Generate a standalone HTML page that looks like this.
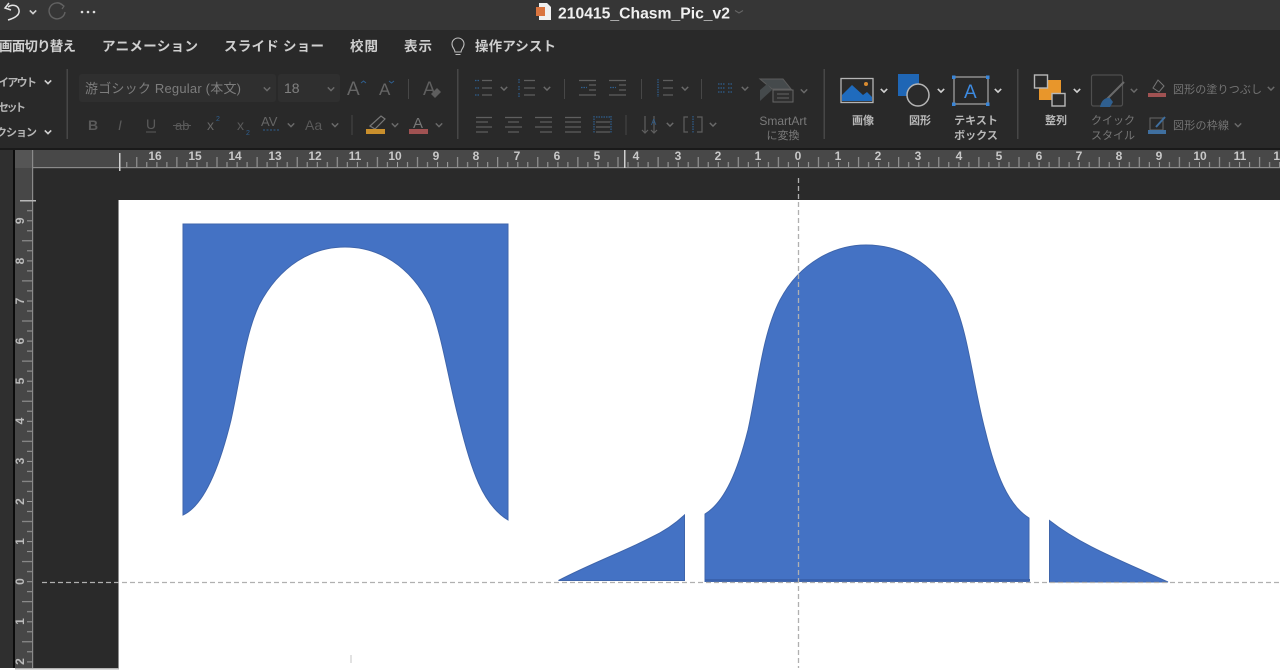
<!DOCTYPE html>
<html lang="ja"><head><meta charset="utf-8"><title>210415_Chasm_Pic_v2</title>
<style>
html,body{margin:0;padding:0;background:#2a2a2a;width:1280px;height:670px;overflow:hidden}
svg{display:block}
text{font-family:"Liberation Sans","Noto Sans CJK JP",sans-serif}
.chrome{filter:blur(.35px)}
.m{font-size:13.5px;font-weight:700;fill:#cfcfcf}
.s{font-size:11px;font-weight:700;fill:#b5b5b5}
.d{font-size:11px;fill:#757575}
.l{font-size:11px;font-weight:700;fill:#b8b8b8;text-anchor:middle}
.r{font-size:12px;fill:#c8c8c8;text-anchor:middle;font-weight:700}
.v{font-size:12px;fill:#bbb;text-anchor:middle;font-weight:700}
.g{stroke:#5f5f5f;stroke-width:1.2;fill:none}
.b{stroke:#2f5f8f;stroke-width:1.2;fill:none;stroke-dasharray:1.5 1}
</style></head><body>
<svg width="1280" height="670" viewBox="0 0 1280 670" xmlns="http://www.w3.org/2000/svg">
<defs>
<path id="c" d="M-3.2 -1.6L0 1.6L3.2 -1.6" fill="none" stroke="#6a6a6a" stroke-width="1.5"/>
<path id="w" d="M-3.2 -1.6L0 1.6L3.2 -1.6" fill="none" stroke="#d0d0d0" stroke-width="1.6"/>
<pattern id="ph" patternUnits="userSpaceOnUse" x="798" y="157" width="40.1" height="10">
<rect x="0" y="5" width="1" height="5" fill="#a0a0a0"/><rect x="10" y="5" width="1" height="5" fill="#a0a0a0"/><rect x="20" y="0" width="1" height="10" fill="#a0a0a0"/><rect x="30" y="5" width="1" height="5" fill="#a0a0a0"/>
</pattern>
<pattern id="pv" patternUnits="userSpaceOnUse" x="22" y="581.2" width="10" height="40.1">
<rect x="5" y="0" width="5" height="1" fill="#9a9a9a"/><rect x="5" y="10" width="5" height="1" fill="#9a9a9a"/><rect x="0" y="20" width="10" height="1" fill="#9a9a9a"/><rect x="5" y="30" width="5" height="1" fill="#9a9a9a"/>
</pattern>
</defs>

<g class="chrome">
<!-- chrome backgrounds -->
<rect width="1280" height="670" fill="#2a2a2a"/>
<rect width="1280" height="30" fill="#363636"/>
<rect y="30" width="1280" height="119" fill="#292929"/>
<rect y="148" width="1280" height="2" fill="#1a1a1a"/>

<!-- title bar -->
<path d="M8 7C12 4 18 5 19 10C20 15 15 18 8 20" fill="none" stroke="#e4e4e4" stroke-width="1.5"/>
<path d="M9 3L5 8L11 10" fill="none" stroke="#e4e4e4" stroke-width="1.5"/>
<use href="#w" x="33" y="12"/>
<path d="M63 5.5A8 8 0 1 0 65 12" fill="none" stroke="#626262" stroke-width="1.4"/>
<path d="M60 3.5L64 6L62 9" fill="none" stroke="#626262" stroke-width="1.2"/>
<circle cx="82" cy="12" r="1.3" fill="#ddd"/><circle cx="88" cy="12" r="1.3" fill="#ddd"/><circle cx="94" cy="12" r="1.3" fill="#ddd"/>
<path d="M539 3H547L551 7V20H539Z" fill="#f0f0f0"/>
<rect x="536" y="7" width="9" height="9" fill="#d9743f"/>
<text x="558" y="18.5" font-size="16" font-weight="700" fill="#f0f0f0" textLength="172" lengthAdjust="spacingAndGlyphs">210415_Chasm_Pic_v2</text>
<path d="M735 10.5L739 13L743 10.5" fill="none" stroke="#666" stroke-width="1.1"/>

<!-- menu row -->
<text class="m" x="-1" y="51" textLength="77">画面切り替え</text>
<text class="m" x="102" y="51" textLength="96">アニメーション</text>
<text class="m" x="224" y="51" textLength="100">スライド ショー</text>
<text class="m" x="350" y="51" textLength="28">校閲</text>
<text class="m" x="404" y="51" textLength="28">表示</text>
<path d="M455 52C455 49 452 48 452 44A6 6 0 1 1 464 44C464 48 461 49 461 52ZM455.500 54.500H460.500" fill="none" stroke="#bdbdbd" stroke-width="1.1"/>
<text class="m" x="475" y="51" textLength="81">操作アシスト</text>

<!-- layout group -->
<text class="s" x="-2" y="86" textLength="39">イアウト</text><use href="#w" x="48" y="82"/>
<text class="s" x="-2" y="111" textLength="28">セット</text>
<text class="s" x="-4" y="136" textLength="41">クション</text><use href="#w" x="48" y="132"/>

<!-- separators -->
<g fill="#474747">
<rect x="66.500" y="69" width="1.500" height="70"/><rect x="457" y="69" width="1.500" height="70"/><rect x="823.500" y="69" width="1.500" height="70"/><rect x="1017" y="69" width="1.500" height="70"/>
<rect x="408" y="79" width="1" height="20"/><rect x="351.500" y="115" width="1" height="20"/><rect x="564" y="79" width="1" height="20"/><rect x="641" y="79" width="1" height="20"/><rect x="701" y="79" width="1" height="20"/><rect x="625.500" y="115" width="1" height="20"/>
</g>

<!-- font boxes -->
<rect x="79" y="74" width="197" height="28" rx="3" fill="#2f2f2f"/>
<rect x="278" y="74" width="62" height="28" rx="3" fill="#2f2f2f"/>
<text x="85" y="93" font-size="13" fill="#7d7d7d" textLength="156">游ゴシック Regular (本文)</text>
<use href="#c" x="267" y="89"/>
<text x="284" y="93" font-size="14" fill="#808080">18</text>
<use href="#c" x="331" y="89"/>
<text x="347" y="95" font-size="19" fill="#666">A</text><path d="M361 83L363.500 81L366 83" stroke="#2f5f8f" fill="none"/>
<text x="379" y="95" font-size="17" fill="#666">A</text><path d="M389 81L391.500 83L394 81" stroke="#2f5f8f" fill="none"/>
<text x="423" y="95" font-size="19" fill="#5e5e5e">A</text><path d="M431 94L437 88L441 92L435 98Z" fill="#5e5e5e"/>

<!-- font row 2 -->
<text x="88" y="130" font-size="14" font-weight="700" fill="#5a5a5a">B</text>
<text x="118" y="130" font-size="14" font-style="italic" fill="#5a5a5a">I</text>
<text x="146" y="129" font-size="14" fill="#5a5a5a">U</text><rect x="146" y="131.500" width="10" height="1" fill="#5a5a5a"/>
<text x="175" y="130" font-size="13" fill="#5a5a5a">ab</text><rect x="173" y="125" width="18" height="1" fill="#5a5a5a"/>
<text x="207" y="130" font-size="14" fill="#666">x</text><text x="216" y="121" font-size="7" fill="#2f5f8f">2</text>
<text x="237" y="130" font-size="14" fill="#5a5a5a">x</text><text x="246" y="135" font-size="7" fill="#2f5f8f">2</text>
<text x="261" y="126" font-size="13" fill="#666">AV</text><path d="M263 130H279" stroke="#2f5f8f" stroke-dasharray="2 1.500"/>
<use href="#c" x="291" y="125"/>
<text x="305" y="130" font-size="14" fill="#5a5a5a">Aa</text>
<use href="#c" x="335" y="125"/>
<path d="M370 126L381 116L385 119L375 129Z" fill="none" stroke="#777" stroke-width="1.2"/>
<rect x="366" y="129" width="19" height="5" fill="#c98f2c"/>
<use href="#c" x="395" y="125"/>
<text x="413" y="128" font-size="15" fill="#777">A</text><rect x="409" y="129" width="19" height="5" fill="#a05252"/>
<use href="#c" x="439" y="125"/>

<!-- paragraph row 1 -->
<path class="g" d="M482 80.500H492M482 88H492M482 95H492"/><path class="b" d="M475 80.500H479M475 88H479M475 95H479"/>
<use href="#c" x="504" y="88.500"/>
<path class="g" d="M524 80.500H535M524 88H535M524 95H535"/><path class="b" d="M519 79V83M519 86V90M519 93V97"/>
<use href="#c" x="547" y="88.500"/>
<path class="g" d="M579 80.500H596M589 85H596M589 90H596M579 95H596"/><path class="b" d="M581 87.500H587"/>
<path class="g" d="M609 80.500H626M619 85H626M619 90H626M609 95H626"/><path class="b" d="M610 87.500H616"/>
<path class="g" d="M663 80.500H673M663 88H673M663 95H673"/><path class="b" d="M658 79V97"/>
<use href="#c" x="685" y="88.500"/>
<path class="b" d="M718 84H725M718 88H725M718 92H725M728 84H733M728 88H733M728 92H733"/>
<use href="#c" x="745" y="88.500"/>
<path d="M760 79H783L791 89H772Z" fill="#454a4c" stroke="#5b5b5b"/>
<path d="M760 90L767 84L772 90L760 101Z" fill="#454a4c"/>
<rect x="773" y="90" width="20" height="12" fill="#2f2f2f" stroke="#666"/>
<path d="M777 94H789M777 98H789" stroke="#666"/>
<use href="#c" x="804" y="91"/>
<text class="l" x="783" y="125" style="fill:#7a7a7a;font-weight:400;font-size:12px">SmartArt</text>
<text class="l" x="783" y="139" style="fill:#7a7a7a;font-weight:400">に変換</text>

<!-- paragraph row 2 -->
<path class="g" d="M476 117.500H492M476 122H488M476 127H492M476 132H488"/>
<path class="g" d="M505 117.500H522M508 122H519M505 127H522M508 132H519"/>
<path class="g" d="M535 117.500H552M540 122H552M535 127H552M540 132H552"/>
<path class="g" d="M565 117.500H581M565 122H581M565 127H581M565 132H581"/>
<path class="g" d="M596 122H610M596 127H610M596 132H610"/><path class="b" d="M594 116V133M611 116V133M596 117H610"/>
<path class="g" d="M645 116V133M642 130L645 133L648 130M654 116V133M651 130L654 133L657 130"/>
<text x="651" y="125" font-size="8" fill="#2f5f8f">A</text>
<use href="#c" x="670" y="124.500"/>
<path class="g" d="M688 117H684V132H688M697 117H702V132H697"/><path class="b" d="M693 116V133"/>
<use href="#c" x="713" y="124.500"/>

<!-- insert group -->
<rect x="841" y="78.500" width="32" height="24" fill="#2a2a2a" stroke="#b5b5b5" stroke-width="1.300"/>
<path d="M842 101V95L852 85L863 95L867 92L872 97V101Z" fill="#1f6bbd"/>
<circle cx="866" cy="84" r="2" fill="#d98b30"/>
<use href="#w" x="884" y="90.500"/>
<text class="l" x="863" y="124">画像</text>
<rect x="898" y="74" width="21" height="22" fill="#1f66b5"/>
<circle cx="918" cy="95" r="11" fill="#2a2a2a" stroke="#b5b5b5" stroke-width="1.500"/>
<use href="#w" x="941" y="90.500"/>
<text class="l" x="920" y="124">図形</text>
<rect x="954" y="77" width="34" height="27" fill="none" stroke="#a8a8a8" stroke-width="1.200"/>
<g fill="#3a86d8"><rect x="952" y="75.500" width="3.500" height="3.500"/><rect x="986" y="75.500" width="3.500" height="3.500"/><rect x="952" y="102.500" width="3.500" height="3.500"/><rect x="986" y="102.500" width="3.500" height="3.500"/></g>
<text x="964" y="98" font-size="19" fill="#3d8ae0">A</text>
<use href="#w" x="998" y="90.500"/>
<text class="l" x="976" y="124">テキスト</text>
<text class="l" x="976" y="139">ボックス</text>

<!-- arrange -->
<rect x="1039" y="80" width="22" height="20" fill="#e8962b"/>
<rect x="1034.500" y="75" width="13" height="13" fill="#2a2a2a" stroke="#b8b8b8" stroke-width="1.400"/>
<rect x="1052" y="93.500" width="13" height="12.500" fill="#2a2a2a" stroke="#b8b8b8" stroke-width="1.400"/>
<use href="#w" x="1077" y="90.500"/>
<text class="l" x="1056" y="124">整列</text>
<rect x="1091.500" y="75" width="31" height="31" rx="2" fill="none" stroke="#4f4f4f" stroke-width="1.200"/>
<path d="M1107 99L1124 82" stroke="#6a6a6a" stroke-width="2"/>
<path d="M1100 107C1101 101 1105 97 1110 98L1113 102L1110 107Z" fill="#2f5f8f"/>
<use href="#c" x="1134" y="90.500"/>
<text class="l" x="1113" y="124" style="fill:#777;font-weight:400">クイック</text>
<text class="l" x="1113" y="139" style="fill:#777;font-weight:400">スタイル</text>

<path d="M1153 88L1158 80L1164 86L1159 92Z" fill="none" stroke="#777"/>
<rect x="1148" y="93" width="18" height="4" fill="#a05252"/>
<text class="d" x="1173" y="93" textLength="89">図形の塗りつぶし</text>
<use href="#c" x="1271" y="88.500"/>
<rect x="1150" y="118" width="13" height="12" fill="none" stroke="#666"/>
<path d="M1156 127L1165 117" stroke="#3f6f9f" stroke-width="2"/>
<rect x="1148" y="130" width="18" height="4" fill="#3f6f9f"/>
<text class="d" x="1173" y="129" textLength="56">図形の枠線</text>
<use href="#c" x="1238" y="125"/>

<!-- rulers -->
<rect x="15" y="150" width="1265" height="18" fill="#484848"/>
<rect x="15" y="150" width="18" height="18" fill="#555"/>
<rect x="0" y="150" width="14" height="520" fill="#2f2f2f"/>
<rect x="13" y="150" width="2" height="520" fill="#0c0c0c"/>
<rect x="15" y="168" width="18" height="500" fill="#474747"/>
<rect x="120" y="157" width="1160" height="10" fill="url(#ph)"/>
<rect x="22" y="202" width="10" height="466" fill="url(#pv)"/>
<rect x="33" y="167" width="1247" height="1.200" fill="#8a8a8a"/>
<rect x="32" y="150" width="1.200" height="518" fill="#8a8a8a"/>
<rect x="119" y="153" width="1.500" height="18" fill="#d0d0d0"/>
<rect x="624" y="150" width="1.500" height="18" fill="#d0d0d0"/>
<rect x="20" y="200" width="16" height="1.500" fill="#b8b8b8"/>

<text class="r" x="155" y="160">16</text><text class="r" x="195" y="160">15</text><text class="r" x="235" y="160">14</text><text class="r" x="275" y="160">13</text><text class="r" x="315" y="160">12</text><text class="r" x="355" y="160">11</text><text class="r" x="395" y="160">10</text><text class="r" x="436" y="160">9</text><text class="r" x="476" y="160">8</text><text class="r" x="517" y="160">7</text><text class="r" x="557" y="160">6</text><text class="r" x="597" y="160">5</text><text class="r" x="636" y="160">4</text><text class="r" x="678" y="160">3</text><text class="r" x="718" y="160">2</text><text class="r" x="758" y="160">1</text><text class="r" x="798" y="160">0</text><text class="r" x="838" y="160">1</text><text class="r" x="878" y="160">2</text><text class="r" x="918" y="160">3</text><text class="r" x="959" y="160">4</text><text class="r" x="999" y="160">5</text><text class="r" x="1039" y="160">6</text><text class="r" x="1079" y="160">7</text><text class="r" x="1119" y="160">8</text><text class="r" x="1159" y="160">9</text><text class="r" x="1200" y="160">10</text><text class="r" x="1240" y="160">11</text><text class="r" x="1280" y="160">12</text>

<text class="v" transform="translate(24 220.800) rotate(-90)">9</text>
<text class="v" transform="translate(24 261) rotate(-90)">8</text>
<text class="v" transform="translate(24 301) rotate(-90)">7</text>
<text class="v" transform="translate(24 341) rotate(-90)">6</text>
<text class="v" transform="translate(24 381) rotate(-90)">5</text>
<text class="v" transform="translate(24 421) rotate(-90)">4</text>
<text class="v" transform="translate(24 461) rotate(-90)">3</text>
<text class="v" transform="translate(24 501.500) rotate(-90)">2</text>
<text class="v" transform="translate(24 541.500) rotate(-90)">1</text>
<text class="v" transform="translate(24 581.500) rotate(-90)">0</text>
<text class="v" transform="translate(24 621.500) rotate(-90)">1</text>
<text class="v" transform="translate(24 661.500) rotate(-90)">2</text>
</g>

<!-- slide -->
<rect x="119" y="200" width="1161" height="468" fill="#fff"/>
<rect x="118" y="200" width="1" height="468" fill="#8f8f8f"/>
<rect x="0" y="668" width="1280" height="2" fill="#fff"/>
<rect x="15" y="668" width="104" height="1.500" fill="#b5b5b5"/>
<rect x="350.500" y="655" width="1" height="8" fill="#c4c4c4"/>

<g fill="#4472c4" stroke="#3f65ab" stroke-width="1">
<path d="M183 224H508V520C483 505 471 470 459 420C448 378 442 335 430 305C410 265 378 247 345 247C312 247 280 265 259 305C245 335 240 380 231 420C220 465 205 505 183 515Z"/>
<path d="M705 514C725 502 738 470 748 430C758 385 762 335 780 300C800 262 835 245 866 245C900 245 932 262 952 298C968 330 972 380 985 430C996 475 1008 505 1029 518V581.500H705Z"/>
<path d="M558.500 580.500C590 564 625 551 650 538C663 532 675 524 684.500 515V580.500Z"/>
<path d="M1049.500 520.500C1082 546 1120 560 1168 582H1049.500Z"/>
</g>
<rect x="705" y="579" width="325" height="2.500" fill="#3a62ad"/>

<!-- guides -->
<path d="M42 582.500H1280" stroke="#b0b0b0" stroke-width="1.300" stroke-dasharray="5 3"/>
<path d="M798.500 178V668" stroke="#b0b0b0" stroke-width="1.300" stroke-dasharray="5 3"/>
</svg>
</body></html>
